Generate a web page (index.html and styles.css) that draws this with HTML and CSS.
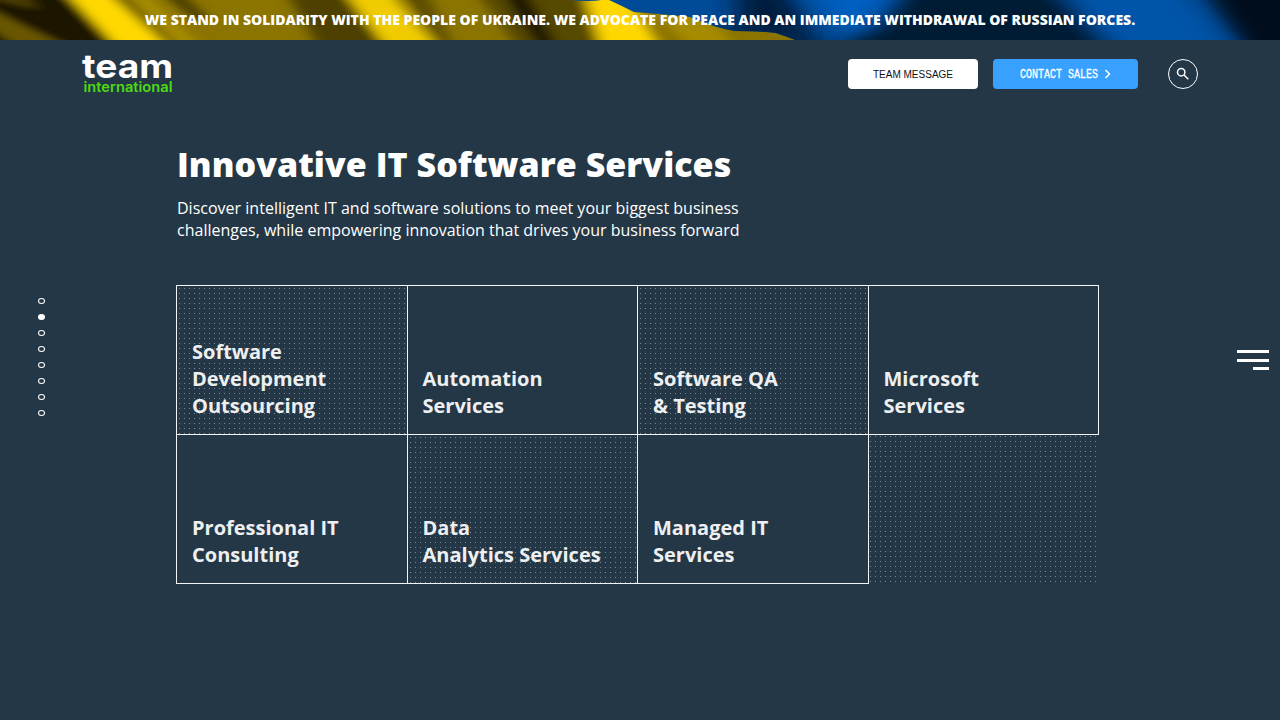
FILE: index.html
```
<!DOCTYPE html>
<html lang="en">
<head>
<meta charset="utf-8">
<title>Team International</title>
<link rel="stylesheet" href="styles.css">
</head>
<body>
<div class="banner">
  <svg class="flag" viewBox="0 0 1280 40" preserveAspectRatio="none" aria-hidden="true">
    <defs>
      <filter id="soft" x="-20%" y="-100%" width="140%" height="300%"><feGaussianBlur stdDeviation="7 2"/></filter>
      <filter id="wide" x="-20%" y="-100%" width="140%" height="300%"><feGaussianBlur stdDeviation="14 5"/></filter>
      <clipPath id="blue"><path d="M562 -1Q590 3 607 -1Q622 6 634 12Q660 14 690 17Q712 27 735 31Q760 31 776 33Q790 38 798 41H1280V-1Z"/></clipPath>
    </defs>
    <rect width="1280" height="40" fill="#8b7400"/>
    <g filter="url(#soft)">
      <path d="M-40 -10H68L135 50H-40Z" fill="#1a1400"/>
      <path d="M-20 4L70 48H20L-20 22Z" fill="#695600"/>
      <path d="M-20 -10H22L38 10L-20 -4Z" fill="#4a3d00"/>
      <path d="M62 -10H104L172 50H120Z" fill="#ffd800"/>
      <path d="M106 -10H120L182 50H174Z" fill="#6e5b00"/>
      <path d="M122 -10H142L205 50H185Z" fill="#a88d00"/>
      <path d="M158 -10H178L210 20L195 20Z" fill="#463a00"/>
      <path d="M285 -10H345L390 50H320Z" fill="#4d4000"/>
      <path d="M342 -10H388L440 50H388Z" fill="#efcb00"/>
      <path d="M400 -10H425L455 50H445Z" fill="#5c4c00"/>
      <path d="M475 -10H580L600 50H520Z" fill="#574800"/>
      <path d="M500 -10H525L560 50H540Z" fill="#1f1900"/>
      <path d="M583 -10H625L662 50H602Z" fill="#ffd700"/>
      <path d="M650 10H700L740 50H695Z" fill="#a68b00"/>
    </g>
    <g clip-path="url(#blue)">
      <rect x="550" width="730" height="40" fill="#004b97"/>
      <g filter="url(#wide)">
        <path d="M735 -20H780L830 60H740Z" fill="#001e3d"/>
        <path d="M640 25L800 30V60H640Z" fill="#00284f"/>
        <path d="M795 -30H915L870 30L835 26Z" fill="#005fc0"/>
        <path d="M910 -20H1060L1140 60H830L870 28Z" fill="#001a36"/>
        <path d="M1050 -20H1165L1235 60H1125Z" fill="#0055aa"/>
        <path d="M1195 -20H1320V60H1250Z" fill="#000d1c"/>
      </g>
    </g>
  </svg>
  <div class="banner-text">WE STAND IN SOLIDARITY WITH THE PEOPLE OF UKRAINE. WE ADVOCATE FOR PEACE AND AN IMMEDIATE WITHDRAWAL OF RUSSIAN FORCES.</div>
</div>
<header class="header">
  <svg class="logo" width="92" height="42" viewBox="0 0 92 42">
    <text class="logo-team" x="0" y="25" textLength="91" lengthAdjust="spacingAndGlyphs">team</text>
    <text class="logo-intl" x="1.5" y="38.5" textLength="89" lengthAdjust="spacingAndGlyphs">international</text>
  </svg>
  <nav class="actions">
    <a class="btn btn-message">TEAM MESSAGE</a>
    <a class="btn btn-contact">
      <svg class="contact" width="92" height="20" viewBox="0 0 92 20">
        <text class="contact-label" x="0" y="13.5" textLength="78" lengthAdjust="spacingAndGlyphs">CONTACT SALES</text>
        <path class="chevron" d="M85.5 6L89.5 10L85.5 14"/>
      </svg>
    </a>
    <a class="search">
      <svg width="30" height="30" viewBox="0 0 30 30">
        <circle cx="13.2" cy="13.2" r="3.7"/><path d="M16 16L20.3 20.3"/>
      </svg>
    </a>
  </nav>
</header>
<main class="main">
  <h1 class="title">Innovative IT Software Services</h1>
  <p class="lead">Discover intelligent IT and software solutions to meet your biggest business<br>challenges, while empowering innovation that drives your business forward</p>
  <section class="grid">
    <a class="cell dots">Software<br>Development<br>Outsourcing</a>
    <a class="cell even">Automation<br>Services</a>
    <a class="cell dots">Software QA<br>&amp; Testing</a>
    <a class="cell even">Microsoft<br>Services</a>
    <a class="cell">Professional IT<br>Consulting</a>
    <a class="cell dots even">Data<br>Analytics Services</a>
    <a class="cell">Managed IT<br>Services</a>
    <div class="cell blank dots"></div>
  </section>
</main>
<nav class="pager"><i></i><i class="on"></i><i></i><i></i><i></i><i></i><i></i><i></i></nav>
<div class="menu"><i></i><i></i><i class="short"></i></div>
</body>
</html>
```
FILE: styles.css
```
* { box-sizing: border-box; }
body {
  margin: 0;
  height: 720px;
  overflow: hidden;
  background: #243746;
  color: #fff;
  font-family: "Open Sans", sans-serif;
}
.banner { position: relative; height: 40px; overflow: hidden; }
.flag { position: absolute; inset: 0; width: 100%; height: 40px; }
.banner-text {
  position: relative;
  text-align: center;
  font-size: 14px;
  font-weight: 800;
  line-height: 40px;
  white-space: nowrap;
}
.header {
  display: flex;
  justify-content: space-between;
  align-items: flex-start;
  height: 69px;
  padding: 13px 82px 0;
}
.logo { display: block; overflow: visible; }
.logo-team, .logo-intl { font-family: Inter, sans-serif; }
.logo-team { font-size: 33px; font-weight: 700; fill: #fff; }
.logo-intl { font-size: 14px; font-weight: 600; fill: #4cdb13; }
.actions { display: flex; padding-top: 6px; }
.btn { display: flex; height: 30px; border-radius: 4px; align-items: center; justify-content: center; }
.btn-message {
  width: 130px;
  margin-right: 15px;
  padding-top: 2px;
  background: #fff;
  color: #111;
  font: 10px/28px "Liberation Sans", sans-serif;
}
.btn-contact { width: 145px; margin-right: 30px; background: #38a0ff; }
.contact { display: block; overflow: visible; }
.contact-label {
  font: 12px "Liberation Mono", monospace;
  fill: #fff;
  stroke: #fff;
  stroke-width: 0.3;
}
.chevron { fill: none; stroke: #fff; stroke-width: 1.5; }
.search { width: 30px; height: 30px; border: 1px solid #fff; border-radius: 50%; }
.search svg { display: block; margin: -1px; fill: none; stroke: #fff; stroke-width: 1.5; }
.main { padding: 34px 0 0 176px; }
.title {
  margin: 0 0 0 1px;
  font-size: 34px;
  font-weight: 800;
  line-height: 43px;
  letter-spacing: 0.03px;
  white-space: nowrap;
}
.lead { margin: 11px 0 0 1px; font-size: 16px; line-height: 22px; letter-spacing: 0.01px; }
.grid {
  display: grid;
  grid-template-columns: 231px 230px 231px 230px;
  grid-template-rows: 149px 149px;
  width: 923px;
  margin-top: 44px;
}
.cell {
  display: flex;
  align-items: flex-end;
  margin: 0 -1px -1px 0;
  padding: 0 0 15px 15px;
  border: 1px solid #f2f4f5;
  color: #edeff0;
  font-size: 20px;
  font-weight: 700;
  line-height: 27px;
}
.even { padding-left: 14.5px; }
.dots {
  background-image: conic-gradient(from 270deg at 1px 1px, #7c8790 90deg, transparent 0);
  background-size: 5px 5px;
  background-position: 2px 2px;
}
.blank { border-color: transparent; background-position: 1px 1px; background-clip: padding-box; }
.pager {
  position: absolute;
  left: 38px;
  top: 298px;
  display: flex;
  flex-direction: column;
  gap: 10px;
}
.pager i { width: 7px; height: 6px; border: 1px solid #fff; border-radius: 50%; }
.pager .on { background: #fff; }
.menu {
  position: absolute;
  left: 1237px;
  top: 350px;
  display: flex;
  flex-direction: column;
  align-items: flex-end;
  gap: 5.5px;
  width: 32px;
}
.menu i { width: 32px; height: 3px; background: #fff; }
.menu .short { width: 16px; }
```
